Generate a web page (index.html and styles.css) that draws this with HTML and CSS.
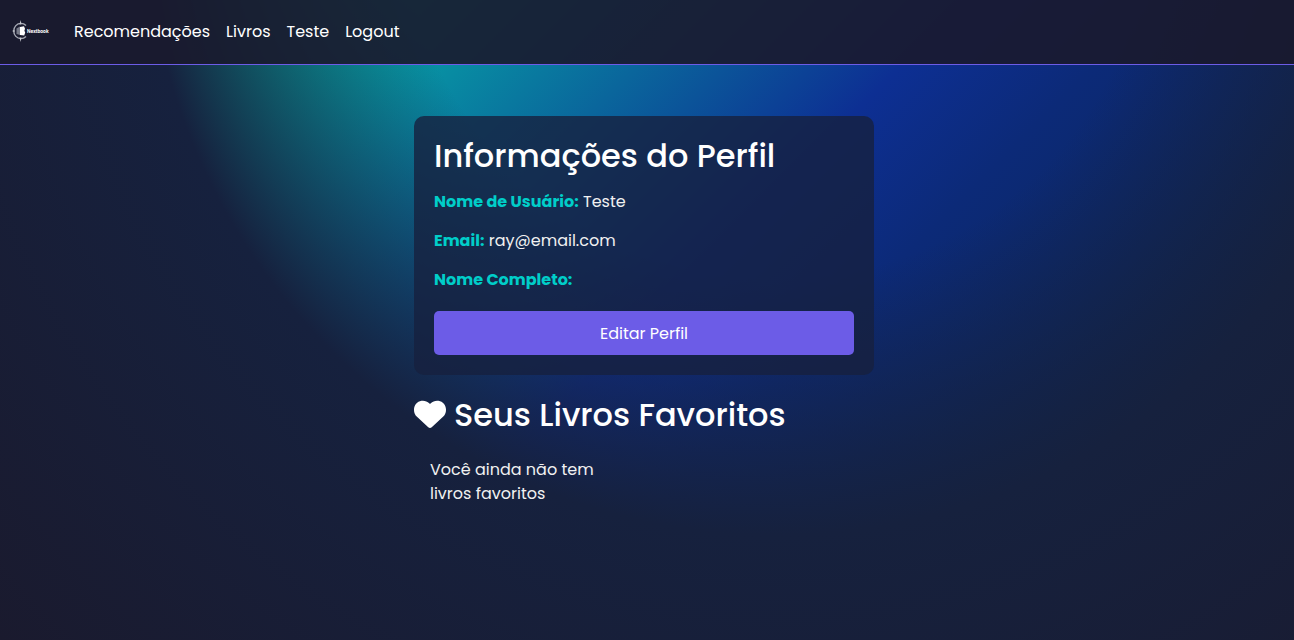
FILE: index.html
```html
<!DOCTYPE html>
<html lang="pt-BR">
<head>
<meta charset="utf-8">
<meta name="viewport" content="width=device-width, initial-scale=1">
<title>Nextbook</title>
<link rel="stylesheet" href="styles.css">
</head>
<body>
<header class="navbar">
  <a class="brand" href="#" aria-label="Nextbook">
    <svg class="brand-mark" viewBox="0 0 15 22" aria-hidden="true">
      <path d="M14 5.600A7.200 7.600 0 1 0 14 16.400" fill="none" stroke="#a6a9b4" stroke-width="1.400"/>
      <path d="M8.500 0l1 4.500h-2zM8.500 22l1-4.500h-2zM0 11l2.600-1v2z" fill="#c5c7ce"/>
      <path d="M4.500 8.500l3.500-2V15l-3.500-1z" fill="#777a88"/>
      <path d="M8 7l4-.800 1 2.600-.600 2 .800 1.800-1 2.800L8 15z" fill="#fff"/>
    </svg>
    <span class="brand-name">Nextbook</span>
  </a>
  <nav class="links">
    <a href="#">Recomendações</a>
    <a href="#">Livros</a>
    <a href="#">Teste</a>
    <a href="#">Logout</a>
  </nav>
</header>
<main class="content">
  <section class="card">
    <h1 class="title">Informações do Perfil</h1>
    <p class="field"><strong>Nome de Usuário:</strong> Teste</p>
    <p class="field"><strong>Email:</strong> ray@email.com</p>
    <p class="field"><strong>Nome Completo:</strong></p>
    <button class="edit" type="button">Editar Perfil</button>
  </section>
  <section class="favorites">
    <h2 class="title">
      <svg class="heart" viewBox="0 0 512 512" aria-hidden="true"><path fill="currentColor" d="M47.600 300.400L228.300 469.100c7.500 7 17.400 10.900 27.700 10.900s20.200-3.900 27.700-10.900L464.400 300.400c30.400-28.300 47.600-68 47.600-109.500v-5.800c0-69.900-50.500-129.500-119.400-141C347 36.500 300.600 51.400 268 84L256 96 244 84c-32.600-32.600-79-47.500-124.600-39.900C50.500 55.600 0 115.200 0 185.100v5.800c0 41.500 17.200 81.200 47.600 109.500z"/></svg>
      <span>Seus Livros Favoritos</span>
    </h2>
    <p class="empty">Você ainda não tem livros favoritos</p>
  </section>
</main>
</body>
</html>
```
FILE: styles.css
```css
* { box-sizing: border-box; }

body {
  margin: 0;
  min-height: 100vh;
  color: #f1f1f1;
  font-family: Poppins, Inter, sans-serif;
  font-size: 16px;
  line-height: 24px;
  background:
    radial-gradient(circle at 60% -15%, rgba(22, 33, 62, 0) 35%, #16213e 59%, #1a1a2e 100%),
    linear-gradient(135deg, #02f8b4 0%, #0d2f93 50%, #0c2a78 60%, #0c2030 100%);
}

.navbar {
  display: flex;
  align-items: center;
  gap: 24px;
  height: 65px;
  padding: 0 12px 2px;
  background: rgba(26, 26, 46, .9);
  border-bottom: 1px solid #6c5ce7;
}

.brand {
  display: flex;
  align-items: center;
  width: 38px;
  color: #fff;
  text-decoration: none;
}

.brand-mark { flex: none; width: 15px; height: 22px; }

.brand-name { font-family: Roboto, sans-serif; font-size: 5px; font-weight: 700; line-height: 8px; }

.links { display: flex; gap: 16px; padding-top: 2px; }

.links a { color: #fff; text-decoration: none; }

.content {
  width: 100%;
  max-width: 466px;
  margin: 51px auto 0;
  padding-right: 6px;
}

.card {
  padding: 20px;
  background: rgba(22, 33, 62, .8);
  border-radius: 10px;
}

.title {
  display: flex;
  align-items: center;
  gap: 8px;
  margin: 0;
  color: #fff;
  font-size: 32px;
  font-weight: 500;
  line-height: 40px;
}

.card .title { margin-bottom: 14px; }

.field { margin: 0 0 15px; }

.field strong { color: #00cec9; font-weight: 700; }

.edit {
  display: block;
  width: 100%;
  margin-top: 19px;
  padding: 11px 10px 9px;
  color: #fff;
  background: #6c5ce7;
  border: 0;
  border-radius: 5px;
  font: inherit;
}

.favorites { padding-top: 20px; }

.heart { flex: none; width: 32px; height: 32px; margin-bottom: 2px; }

.empty { width: 200px; margin: 23px 0 0; padding: 0 16px; }
```
